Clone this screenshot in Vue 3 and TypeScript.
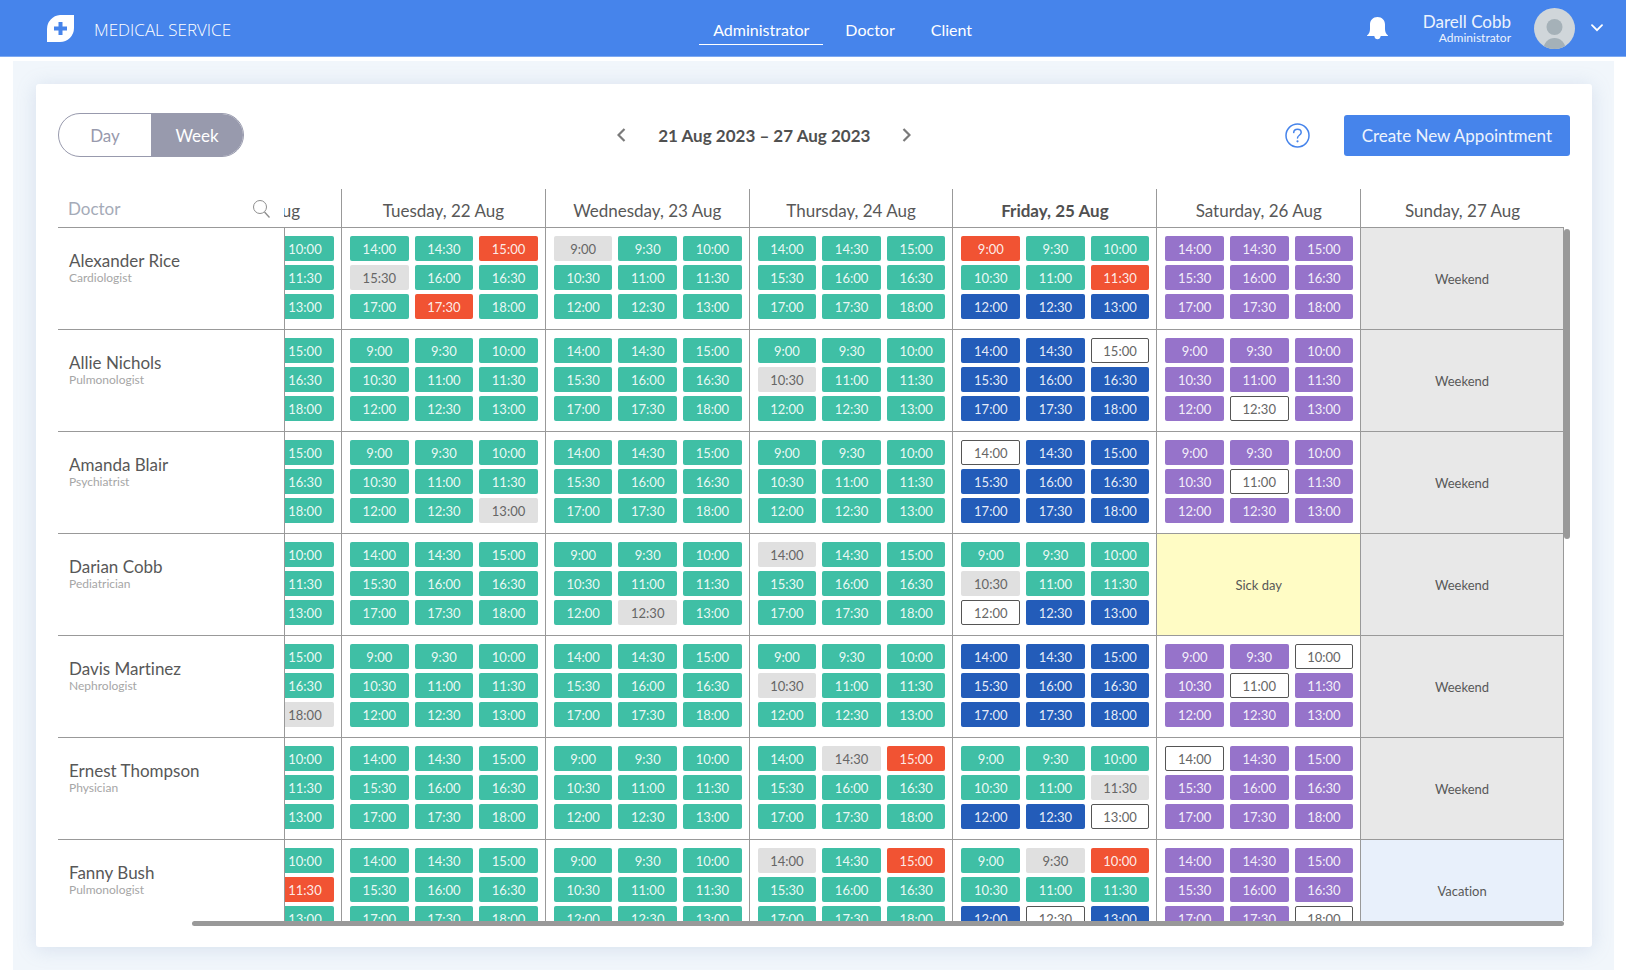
<script setup lang="ts">
import { ref } from 'vue'

type Shift = 'morning' | 'afternoon'
type SlotKind = 'free' | 'busy' | 'past' | 'video' | 'open' | 'home'

interface Slot {
  time: string
  kind: SlotKind
}

interface DayCell {
  slots: Slot[]
  note?: 'Weekend' | 'Vacation' | 'Sick day'
}

interface Doctor {
  name: string
  role: string
  days: DayCell[]
}

const times: Record<Shift, string[]> = {
  morning: ['9:00', '9:30', '10:00', '10:30', '11:00', '11:30', '12:00', '12:30', '13:00'],
  afternoon: ['14:00', '14:30', '15:00', '15:30', '16:00', '16:30', '17:00', '17:30', '18:00'],
}

const kinds: Record<string, SlotKind> = {
  g: 'free',
  r: 'busy',
  e: 'past',
  b: 'video',
  w: 'open',
  p: 'home',
}

function shift(name: Shift, pattern: string): DayCell {
  return { slots: times[name].map((time, i) => ({ time, kind: kinds[pattern[i]] })) }
}
const am = (pattern = 'ggggggggg') => shift('morning', pattern)
const pm = (pattern = 'ggggggggg') => shift('afternoon', pattern)
const off = (note: DayCell['note']): DayCell => ({ slots: [], note })

// Monday is mostly scrolled away: only the last slot of each line stays in view.
function visibleSlots(cell: DayCell, day: number): Slot[] {
  return day === 0 ? cell.slots.filter((_, i) => i % 3 === 2) : cell.slots
}

const weekDays = [
  'Aug',
  'Tuesday, 22 Aug',
  'Wednesday, 23 Aug',
  'Thursday, 24 Aug',
  'Friday, 25 Aug',
  'Saturday, 26 Aug',
  'Sunday, 27 Aug',
]
const today = 4

const doctors: Doctor[] = [
  {
    name: 'Alexander Rice',
    role: 'Cardiologist',
    days: [am(), pm('ggregggrg'), am('egggggggg'), pm(), am('rggggrbbb'), pm('ppppppppp'), off('Weekend')],
  },
  {
    name: 'Allie Nichols',
    role: 'Pulmonologist',
    days: [pm(), am(), pm(), am('gggeggggg'), pm('bbwbbbbbb'), am('pppppppwp'), off('Weekend')],
  },
  {
    name: 'Amanda Blair',
    role: 'Psychiatrist',
    days: [pm(), am('gggggggge'), pm(), am(), pm('wbbbbbbbb'), am('ppppwpppp'), off('Weekend')],
  },
  {
    name: 'Darian Cobb',
    role: 'Pediatrician',
    days: [am(), pm(), am('gggggggeg'), pm('egggggggg'), am('gggeggwbb'), off('Sick day'), off('Weekend')],
  },
  {
    name: 'Davis Martinez',
    role: 'Nephrologist',
    days: [pm('gggggggge'), am(), pm(), am('gggeggggg'), pm('bbbbbbbbb'), am('ppwpwpppp'), off('Weekend')],
  },
  {
    name: 'Ernest Thompson',
    role: 'Physician',
    days: [am(), pm(), am(), pm('gergggggg'), am('gggggebbw'), pm('wpppppppp'), off('Weekend')],
  },
  {
    name: 'Fanny Bush',
    role: 'Pulmonologist',
    days: [am('gggggrggg'), pm(), am(), pm('egrgggggg'), am('gergggbwb'), pm('ppppppppw'), off('Vacation')],
  },
]

const view = ref<'Day' | 'Week'>('Week')
const search = ref('')
</script>

<template>
  <div class="app">
    <header class="topbar">
      <div class="brand">
        <svg class="logo" viewBox="0 0 27 27" aria-hidden="true">
          <path fill="#fff" d="M13 0H27V13A14 14 0 0 1 13 27H0V14A14 14 0 0 1 13 0Z" />
          <path fill="#4684eb" d="M11.500 7h4v4.500H20v4h-4.500V20h-4v-4.500H7v-4h4.500z" />
        </svg>
        <span class="brand-name">MEDICAL SERVICE</span>
      </div>
      <nav class="nav">
        <a href="#administrator" class="active">Administrator</a>
        <a href="#doctor">Doctor</a>
        <a href="#client">Client</a>
      </nav>
      <div class="account">
        <button class="icon-button bell" type="button" aria-label="Notifications">
          <svg width="21" height="23" viewBox="0 0 21 23">
            <path
              fill="#fff"
              d="M10.500 0C6 0 3 3.200 3 7.500V12c0 3-1 4.600-3 6.600V19h7.300c.2 2 1.500 3.300 3.200 3.300s3-1.300 3.200-3.300H21v-.4c-2-2-3-3.600-3-6.600V7.500C18 3.200 15 0 10.500 0z"
            />
          </svg>
        </button>
        <div class="who">
          <span class="who-name">Darell Cobb</span>
          <span class="who-role">Administrator</span>
        </div>
        <svg class="avatar" viewBox="0 0 41 41" aria-hidden="true">
          <defs>
            <clipPath id="avatar-clip"><circle cx="20.500" cy="20.500" r="20.500" /></clipPath>
          </defs>
          <g clip-path="url(#avatar-clip)">
            <rect width="41" height="41" fill="#d0d6da" />
            <circle cx="20.500" cy="19" r="8" fill="#a5b1b8" />
            <circle cx="20.500" cy="41" r="11" fill="#a5b1b8" />
          </g>
        </svg>
        <button class="icon-button" type="button" aria-label="Account menu">
          <svg width="12" height="8" viewBox="0 0 12 8">
            <path d="M1 1.200l5 5 5-5" fill="none" stroke="#fff" stroke-width="1.800" stroke-linecap="round" />
          </svg>
        </button>
      </div>
    </header>

    <main class="page">
      <section class="card">
        <div class="toolbar">
          <div class="toggle">
            <button type="button" :class="{ on: view === 'Day' }" @click="view = 'Day'">Day</button>
            <button type="button" :class="{ on: view === 'Week' }" @click="view = 'Week'">Week</button>
          </div>
          <div class="range">
            <button class="icon-button" type="button" aria-label="Previous week">
              <svg width="9" height="14" viewBox="0 0 9 14">
                <path d="M7.500 1L1.500 7l6 6" fill="none" stroke="#7a7a7a" stroke-width="2.200" />
              </svg>
            </button>
            <span class="range-text">21 Aug 2023 – 27 Aug 2023</span>
            <button class="icon-button" type="button" aria-label="Next week">
              <svg width="9" height="14" viewBox="0 0 9 14">
                <path d="M1.500 1l6 6-6 6" fill="none" stroke="#7a7a7a" stroke-width="2.200" />
              </svg>
            </button>
          </div>
          <div class="actions">
            <button class="icon-button" type="button" aria-label="Help">
              <svg width="25" height="25" viewBox="0 0 25 25" fill="none" stroke="#4684eb">
                <circle cx="12.500" cy="12.500" r="11.500" stroke-width="1.500" />
                <path
                  d="M8.700 9.600c.1-2 1.700-3.300 3.800-3.300s3.700 1.300 3.700 3.200c0 2.800-3.700 2.700-3.700 5.500"
                  stroke-width="1.500"
                  stroke-linecap="round"
                />
                <circle cx="12.500" cy="18.300" r="1.100" fill="#4684eb" stroke="none" />
              </svg>
            </button>
            <button class="primary" type="button">Create New Appointment</button>
          </div>
        </div>

        <div class="schedule">
          <div class="viewport">
            <table>
              <colgroup>
                <col class="col-doctor" />
                <col class="col-cut" />
                <col v-for="n in 6" :key="n" />
              </colgroup>
              <thead>
                <tr>
                  <th class="search-cell" scope="col">
                    <label class="search">
                      <input v-model="search" type="text" placeholder="Doctor" aria-label="Doctor" />
                      <svg width="17" height="18" viewBox="0 0 17 18" fill="none" stroke="#8e8e8e">
                        <circle cx="7" cy="7" r="6.500" />
                        <path d="M11.500 12l5 5.500" stroke-width="1.400" />
                      </svg>
                    </label>
                  </th>
                  <th
                    v-for="(day, i) in weekDays"
                    :key="day"
                    scope="col"
                    :class="{ today: i === today, cut: i === 0 }"
                  >
                    <div class="day-name">{{ day }}</div>
                  </th>
                </tr>
              </thead>
              <tbody>
                <tr v-for="doctor in doctors" :key="doctor.name">
                  <th class="doctor" scope="row">
                    <span class="doctor-name">{{ doctor.name }}</span>
                    <span class="doctor-role">{{ doctor.role }}</span>
                  </th>
                  <td
                    v-for="(cell, i) in doctor.days"
                    :key="i"
                    :class="[{ cut: i === 0 }, cell.note ? cell.note.toLowerCase().replace(' ', '-') : '']"
                  >
                    <template v-if="cell.note">{{ cell.note }}</template>
                    <div v-else class="slots">
                      <button
                        v-for="slot in visibleSlots(cell, i)"
                        :key="slot.time"
                        type="button"
                        class="slot"
                        :class="slot.kind"
                      >
                        {{ slot.time }}
                      </button>
                    </div>
                  </td>
                </tr>
              </tbody>
            </table>
          </div>
          <div class="thumb-y"></div>
          <div class="thumb-x"></div>
        </div>
      </section>
    </main>
  </div>
</template>

<style>
body {
  margin: 0;
  background: #fff;
}
</style>

<style scoped>
.app {
  display: flex;
  flex-direction: column;
  height: 100vh;
  font-family: Lato, 'Open Sans', sans-serif;
  font-variant-ligatures: none;
  color: #585858;
}

.app *,
.app {
  box-sizing: border-box;
}

button {
  font: inherit;
  font-variant-ligatures: none;
  margin: 0;
  padding: 0;
  border: 0;
  background: none;
  cursor: pointer;
}

.icon-button {
  display: flex;
}

.topbar {
  flex: none;
  display: grid;
  grid-template-columns: 43% auto 1fr;
  align-items: center;
  height: 57px;
  background: #4684eb;
  border-bottom: 1px solid #7da9f1;
  color: #fff;
}

.brand {
  display: flex;
  align-items: center;
  gap: 20px;
  padding-left: 47px;
}

.logo {
  width: 27px;
  height: 27px;
}

.brand-name {
  padding-top: 2px;
  font-family: 'Open Sans', 'Noto Sans', sans-serif;
  font-size: 17px;
  font-weight: 300;
}

.nav {
  display: flex;
  gap: 8px;
}

.nav a {
  padding: 8px 14px 4px;
  border-bottom: 1px solid transparent;
  color: #fff;
  font-size: 16px;
  line-height: 20px;
  text-decoration: none;
}

.nav a.active {
  border-bottom-color: #fff;
}

.account {
  display: flex;
  justify-content: flex-end;
  align-items: center;
  padding-right: 23px;
}

.bell {
  margin-right: 35px;
}

.who {
  display: flex;
  flex-direction: column;
  align-items: flex-end;
  margin-right: 23px;
  padding-top: 2px;
  color: #edf3fd;
}

.who-name {
  font-size: 17px;
  line-height: 18px;
}

.who-role {
  font-size: 12px;
  line-height: 14px;
}

.avatar {
  width: 41px;
  height: 41px;
  margin-right: 16px;
}

.page {
  flex: 1;
  min-height: 0;
  display: flex;
  margin: 4px 12px 0 13px;
  padding: 23px 22px 23px 23px;
  background: #f1f6fb;
}

.card {
  flex: 1;
  min-width: 0;
  display: flex;
  flex-direction: column;
  padding: 29px 22px 21px;
  border-radius: 3px;
  background: #fff;
  box-shadow: 0 2px 20px rgba(120, 145, 190, 0.22);
}

.toolbar {
  flex: none;
  display: flex;
  justify-content: space-between;
  align-items: center;
  margin-bottom: 32px;
}

.toggle {
  display: flex;
  width: 186px;
  height: 44px;
  border: 1px solid #989aad;
  border-radius: 22px;
  overflow: hidden;
}

.toggle button {
  flex: 1;
  color: #989aad;
  font-size: 17px;
}

.toggle button.on {
  background: #989aad;
  color: #fff;
}

.range {
  display: flex;
  align-items: center;
  gap: 32px;
}

.range-text {
  font-size: 17px;
  font-weight: 700;
  color: #505050;
}

.actions {
  display: flex;
  align-items: center;
  gap: 34px;
}

.primary {
  height: 41px;
  padding: 0 18px;
  border-radius: 3px;
  background: #4684eb;
  color: #edf3fd;
  font-size: 17px;
}

.schedule {
  position: relative;
  flex: 1;
  min-height: 0;
  display: flex;
  flex-direction: column;
}

.viewport {
  flex: 1;
  min-height: 0;
  overflow: hidden;
  padding-right: 6px;
}

table {
  width: 100%;
  table-layout: fixed;
  border-collapse: separate;
  border-spacing: 0;
}

.col-doctor {
  width: 226px;
}

.col-cut {
  width: 57px;
}

th,
td {
  padding: 0;
  border-left: 1px solid #999;
  border-bottom: 1px solid #999;
}

thead th {
  height: 39px;
  font-size: 17px;
  font-weight: 400;
  line-height: 20px;
  padding-top: 6px;
}

thead th.today {
  font-weight: 700;
  color: #505050;
}

thead th.search-cell,
thead th.cut,
tbody th {
  border-left: 0;
}

.cut {
  overflow: hidden;
}

.cut > .day-name {
  float: right;
  padding-right: 41px;
}

.cut > .slots {
  float: right;
  grid-template-columns: 58px;
}

.search {
  display: flex;
  align-items: center;
  padding: 0 14px 4px 10px;
}

.search input {
  flex: 1;
  min-width: 0;
  padding: 0;
  border: 0;
  outline: 0;
  background: none;
  color: #585858;
  font: inherit;
}

.search input::placeholder {
  color: #a5abb8;
  opacity: 1;
}

.doctor {
  height: 102px;
  padding: 23px 0 0 11px;
  text-align: left;
  vertical-align: top;
  font-weight: 400;
}

.doctor-name,
.doctor-role {
  display: block;
}

.doctor-name {
  font-size: 17px;
  line-height: 20px;
}

.doctor-role {
  color: #a6a6a6;
  font-size: 12px;
  line-height: 13px;
}

td {
  text-align: center;
  font-size: 13px;
}

td:last-child {
  border-right: 1px solid #999;
}

.weekend {
  background: #e8e8e8;
}

.vacation {
  background: #e8f0fb;
}

.sick-day {
  background: #fffcc5;
}

.slots {
  display: grid;
  grid-template-columns: repeat(3, 1fr);
  gap: 4px 6px;
  padding: 8px 7px 10px 8px;
}

.slot {
  height: 25px;
  border-radius: 2px;
  color: rgba(255, 255, 255, 0.9);
  font-size: 13px;
}

.free {
  background: #3fbfa5;
}

.busy {
  background: #f15333;
}

.past {
  background: #e0e0e0;
  color: #666;
}

.video {
  background: #235cb9;
}

.home {
  background: #9673ca;
}

.open {
  border: 1px solid #555;
  background: #fff;
  color: #666;
}

.thumb-y {
  position: absolute;
  top: 40px;
  right: 0;
  width: 6px;
  height: 42%;
  border-radius: 3px;
  background: #999;
}

.thumb-x {
  flex: none;
  height: 5px;
  margin: 0 6px 0 134px;
  border-radius: 3px;
  background: #999;
}
</style>
